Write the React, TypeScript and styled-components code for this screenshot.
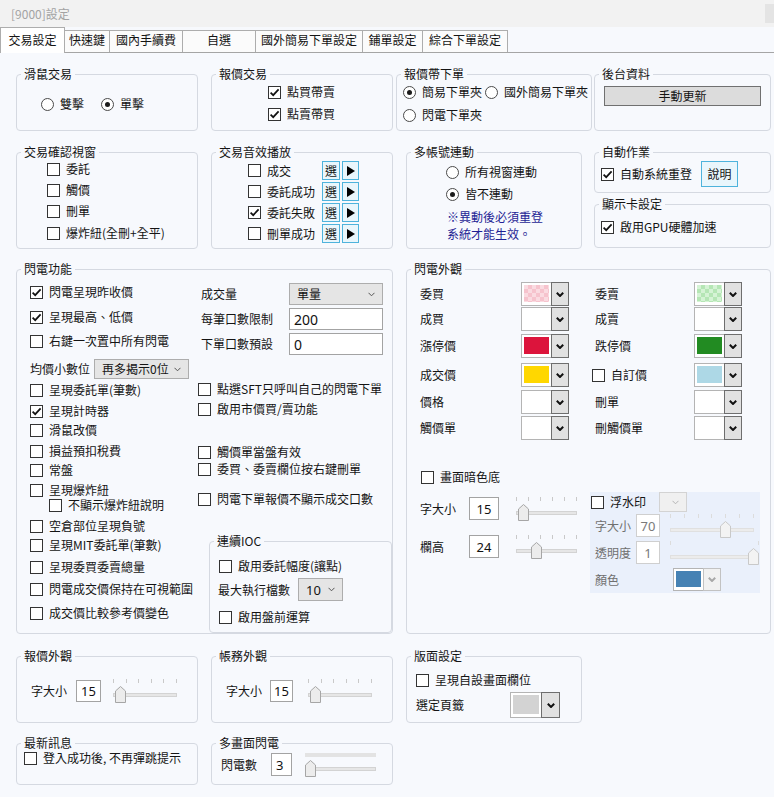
import React from "react";
import styled, { createGlobalStyle } from "styled-components";

const GlobalStyle = createGlobalStyle`
  html, body {
    margin: 0;
    padding: 0;
    background: #f7f9fd;
  }
  body {
    font-family: "Noto Sans CJK TC", "Noto Sans", sans-serif;
    font-size: 12px;
    color: #141414;
  }
`;

const PINK = "repeating-conic-gradient(#f6c3cd 0 25%, #fadbe1 0 50%) 0 0 / 8px 8px";
const GREEN = "repeating-conic-gradient(#b5e6b5 0 25%, #d5f3d5 0 50%) 0 0 / 8px 8px";

const Window = styled.div`
  width: 774px;
  height: 797px;
  overflow: hidden;
  background: #f7f9fd;
`;

const TitleBar = styled.div`
  height: 27px;
  display: flex;
  align-items: center;
  padding-left: 11px;
  background: #f2f2f2;
  color: #a3a3a3;
  line-height: 14px;
`;

const CloseKey = styled.div`
  margin-left: auto;
  margin-right: -20px;
  width: 29px;
  height: 19px;
  background: #e4e4e4;
`;

const TabStrip = styled.div`
  height: 25px;
  display: flex;
  align-items: flex-end;
  border-bottom: 1px solid #a5a5a5;
`;

const Tab = styled.div<{ $w: number; $active?: boolean }>`
  box-sizing: border-box;
  width: ${(p) => p.$w}px;
  height: ${(p) => (p.$active ? 26 : 22)}px;
  margin-bottom: ${(p) => (p.$active ? -1 : 0)}px;
  padding-bottom: ${(p) => (p.$active ? 1 : 3)}px;
  border: 1px solid #adadad;
  border-bottom: none;
  background: ${(p) => (p.$active ? "#ffffff" : "#fbfbfb")};
  position: relative;
  z-index: ${(p) => (p.$active ? 1 : 0)};
  display: flex;
  align-items: center;
  justify-content: center;
  line-height: 14px;
  white-space: nowrap;
  &:not(:first-child) {
    margin-left: -1px;
  }
`;

const Body = styled.div`
  padding: 14px 0 0 16px;
  display: flex;
  flex-direction: column;
`;

const Row = styled.div<{ $mt?: number }>`
  display: flex;
  align-items: flex-start;
  margin-top: ${(p) => p.$mt ?? 0}px;
`;

const Column = styled.div<{ $ml?: number }>`
  display: flex;
  flex-direction: column;
  margin-left: ${(p) => p.$ml ?? 0}px;
`;

const Fieldset = styled.fieldset<{ $w: number; $ml: number; $mt: number }>`
  box-sizing: border-box;
  width: ${(p) => p.$w}px;
  min-width: 0;
  margin: ${(p) => p.$mt}px 0 0 ${(p) => p.$ml}px;
  padding: 0;
  border: 1px solid #d5d9e1;
  border-radius: 4px;
  flex: none;
`;

const Legend = styled.legend`
  margin-left: 4px;
  padding: 0 3px;
  font-size: 12px;
  line-height: 14px;
`;

const Inner = styled.div<{ $h: number }>`
  height: ${(p) => p.$h}px;
`;

const Stack = styled.div<{ $pl?: number; $pt?: number; $w?: number }>`
  display: flex;
  flex-direction: column;
  align-items: flex-start;
  padding: ${(p) => p.$pt ?? 0}px 0 0 ${(p) => p.$pl ?? 0}px;
  ${(p) => (p.$w ? `width: ${p.$w}px; box-sizing: border-box; flex: none;` : "")}
`;

const Split = styled.div`
  display: flex;
  align-items: flex-start;
`;

const Line = styled.div<{ $mt?: number; $ml?: number; $h?: number; $gap?: number; $pl?: number }>`
  display: flex;
  align-items: center;
  height: ${(p) => p.$h ?? 14}px;
  margin-top: ${(p) => p.$mt ?? 0}px;
  margin-left: ${(p) => p.$ml ?? 0}px;
  padding-left: ${(p) => p.$pl ?? 0}px;
  gap: ${(p) => p.$gap ?? 0}px;
  white-space: nowrap;
`;

const Item = styled.div<{ $mt?: number; $ml?: number; $w?: number }>`
  display: flex;
  align-items: center;
  gap: 6px;
  height: 14px;
  line-height: 14px;
  margin-top: ${(p) => p.$mt ?? 0}px;
  margin-left: ${(p) => p.$ml ?? 0}px;
  ${(p) => (p.$w ? `width: ${p.$w}px; flex: none;` : "")}
  white-space: nowrap;
`;

const Cell = styled.span<{ $w: number; $ml?: number; $dim?: boolean }>`
  width: ${(p) => p.$w}px;
  flex: none;
  margin-left: ${(p) => p.$ml ?? 0}px;
  line-height: 14px;
  color: ${(p) => (p.$dim ? "#6f6f6f" : "inherit")};
`;

const CheckBox = styled.span`
  box-sizing: border-box;
  width: 13px;
  height: 13px;
  flex: none;
  border: 1px solid #333333;
  background: #ffffff;
  display: inline-flex;
  align-items: center;
  justify-content: center;
`;

const RadioRing = styled.span<{ $on?: boolean }>`
  box-sizing: border-box;
  width: 13px;
  height: 13px;
  flex: none;
  border-radius: 50%;
  border: 1px solid #4a4a4a;
  background: #ffffff;
  display: inline-flex;
  align-items: center;
  justify-content: center;
  &::after {
    content: "";
    width: 5px;
    height: 5px;
    border-radius: 50%;
    background: ${(p) => (p.$on ? "#1b1b1b" : "transparent")};
  }
`;

const PlainButton = styled.div<{ $w: number; $h: number }>`
  box-sizing: border-box;
  width: ${(p) => p.$w}px;
  height: ${(p) => p.$h}px;
  border: 1px solid #707070;
  background: #dcdcdc;
  display: flex;
  align-items: center;
  justify-content: center;
  line-height: 14px;
`;

const FlatButton = styled.div<{ $w: number; $h: number; $ml?: number }>`
  box-sizing: border-box;
  width: ${(p) => p.$w}px;
  height: ${(p) => p.$h}px;
  margin-left: ${(p) => p.$ml ?? 0}px;
  flex: none;
  border: 1px solid #4eb3dc;
  background: #e9f6fc;
  display: flex;
  align-items: center;
  justify-content: center;
  line-height: 14px;
`;

const Note = styled.div`
  margin-top: 7px;
  margin-left: 1px;
  color: #1f1f95;
  line-height: 17px;
`;

const SelectBox = styled.div<{ $w: number; $h: number; $dim?: boolean; $ml?: number }>`
  box-sizing: border-box;
  width: ${(p) => p.$w}px;
  height: ${(p) => p.$h}px;
  margin-left: ${(p) => p.$ml ?? 0}px;
  flex: none;
  border: 1px solid ${(p) => (p.$dim ? "#d3d3d3" : "#adadad")};
  background: ${(p) => (p.$dim ? "#f0f0f0" : "#e5e5e5")};
  display: flex;
  align-items: center;
  justify-content: space-between;
  padding: 0 7px 0 7px;
  font-size: 12px;
`;

const SelectValue = styled.span<{ $num?: boolean }>`
  font-family: ${(p) => (p.$num ? '"Noto Sans", sans-serif' : "inherit")};
  font-size: ${(p) => (p.$num ? 13 : 12)}px;
  line-height: 14px;
`;

const TextBox = styled.div<{ $w: number; $h: number; $align?: string; $dim?: boolean; $size?: number }>`
  box-sizing: border-box;
  width: ${(p) => p.$w}px;
  height: ${(p) => p.$h}px;
  flex: none;
  border: 1px solid ${(p) => (p.$dim ? "#cfcfcf" : "#a3a3a3")};
  background: #ffffff;
  display: flex;
  align-items: center;
  justify-content: ${(p) => p.$align ?? "center"};
  padding: 0 4px;
  font-family: "Noto Sans", sans-serif;
  font-size: ${(p) => p.$size ?? 13}px;
  color: ${(p) => (p.$dim ? "#7a7a7a" : "#111111")};
`;

const Combo = styled.div<{ $h: number; $ml?: number }>`
  display: flex;
  height: ${(p) => p.$h}px;
  margin-left: ${(p) => p.$ml ?? 0}px;
  flex: none;
`;

const SwatchCell = styled.div<{ $w: number }>`
  box-sizing: border-box;
  width: ${(p) => p.$w}px;
  height: 100%;
  border: 1px solid #b4b4b4;
  border-right: none;
  background: #ffffff;
  padding: 2px 2px 3px 2px;
  display: flex;
`;

const SwatchFill = styled.div<{ $fill: string }>`
  flex: 1;
  background: ${(p) => p.$fill};
`;

const DropCell = styled.div<{ $w: number; $dim?: boolean }>`
  box-sizing: border-box;
  width: ${(p) => p.$w}px;
  height: 100%;
  border: 1px solid ${(p) => (p.$dim ? "#c2c2c2" : "#6e6e6e")};
  background: ${(p) => (p.$dim ? "#f1f1f1" : "#e1e1e1")};
  display: flex;
  align-items: center;
  justify-content: center;
`;

const SliderWrap = styled.div<{ $w: number; $ml?: number }>`
  position: relative;
  width: ${(p) => p.$w}px;
  height: 24px;
  margin-left: ${(p) => p.$ml ?? 0}px;
  flex: none;
`;

const TickRow = styled.div<{ $band?: boolean }>`
  height: 4px;
  display: flex;
  justify-content: space-between;
  background: ${(p) => (p.$band ? "#e3e3e3" : "transparent")};
`;

const Tick = styled.span<{ $dim?: boolean }>`
  width: 1px;
  height: 4px;
  background: ${(p) => (p.$dim ? "#dcdcdc" : "#c9c9c9")};
`;

const Track = styled.div<{ $dim?: boolean }>`
  box-sizing: border-box;
  margin-top: 10px;
  height: 4px;
  border: 1px solid ${(p) => (p.$dim ? "#e0e0e0" : "#d3d3d3")};
  background: ${(p) => (p.$dim ? "#ececec" : "#e6e6e6")};
`;

const Thumb = styled.svg`
  position: absolute;
  top: 7px;
`;

const WaterPanel = styled.div`
  width: 170px;
  height: 101px;
  background: #eaf0fb;
  display: flex;
  flex-direction: column;
  align-items: flex-start;
  flex: none;
`;

const Lower = styled.div`
  display: flex;
  align-items: flex-start;
  margin-top: 8px;
`;

function Group({
  title,
  w,
  h,
  ml = 0,
  mt = 0,
  children,
}: {
  title: string;
  w: number;
  h: number;
  ml?: number;
  mt?: number;
  children?: React.ReactNode;
}) {
  return (
    <Fieldset $w={w} $ml={ml} $mt={mt}>
      <Legend>{title}</Legend>
      <Inner $h={h - 15}>{children}</Inner>
    </Fieldset>
  );
}

function CheckMark() {
  return (
    <svg width="11" height="11" viewBox="0 0 11 11">
      <path d="M1.6 5.6 L4.2 8.2 L9.6 2.4" fill="none" stroke="#111" strokeWidth="1.7" />
    </svg>
  );
}

function CheckItem({ label, on, mt, ml, w }: { label: string; on?: boolean; mt?: number; ml?: number; w?: number }) {
  return (
    <Item $mt={mt} $ml={ml} $w={w}>
      <CheckBox>{on && <CheckMark />}</CheckBox>
      <span>{label}</span>
    </Item>
  );
}

function RadioItem({ label, on, mt }: { label: string; on?: boolean; mt?: number }) {
  return (
    <Item $mt={mt}>
      <RadioRing $on={on} />
      <span>{label}</span>
    </Item>
  );
}

function ThinChevron({ dim }: { dim?: boolean }) {
  return (
    <svg width="7" height="5" viewBox="0 0 7 5">
      <path d="M0.5 0.8 L3.5 3.8 L6.5 0.8" fill="none" stroke={dim ? "#b5b5b5" : "#555"} strokeWidth="1" />
    </svg>
  );
}

function BoldChevron({ dim }: { dim?: boolean }) {
  return (
    <svg width="8" height="5" viewBox="0 0 8 5">
      <path d="M0.8 0.8 L4 4 L7.2 0.8" fill="none" stroke={dim ? "#a8a8a8" : "#111"} strokeWidth="2" />
    </svg>
  );
}

function Select({ w, h, value, dim, ml, num }: { w: number; h: number; value?: string; dim?: boolean; ml?: number; num?: boolean }) {
  return (
    <SelectBox $w={w} $h={h} $dim={dim} $ml={ml}>
      <SelectValue $num={num}>{value}</SelectValue>
      <ThinChevron dim={dim} />
    </SelectBox>
  );
}

function ColorCombo({ fill, w = 48, h = 24, drop = 18, dim, ml }: { fill: string; w?: number; h?: number; drop?: number; dim?: boolean; ml?: number }) {
  return (
    <Combo $h={h} $ml={ml}>
      <SwatchCell $w={w - drop}>
        <SwatchFill $fill={fill} />
      </SwatchCell>
      <DropCell $w={drop} $dim={dim}>
        <BoldChevron dim={dim} />
      </DropCell>
    </Combo>
  );
}

function Slider({ w, ml, at, ticks = 6, band, dim }: { w: number; ml?: number; at: number; ticks?: number; band?: boolean; dim?: boolean }) {
  return (
    <SliderWrap $w={w} $ml={ml}>
      <TickRow $band={band}>
        {!band && Array.from({ length: ticks }).map((_, i) => <Tick key={i} $dim={dim} />)}
      </TickRow>
      <Track $dim={dim} />
      <Thumb width="11" height="17" viewBox="0 0 11 17" style={{ left: at }}>
        <path
          d="M5.5 0.5 L10.5 5 L10.5 16.5 L0.5 16.5 L0.5 5 Z"
          fill={dim ? "#f3f3f3" : "#ececec"}
          stroke={dim ? "#c9c9c9" : "#a6a6a6"}
        />
      </Thumb>
    </SliderWrap>
  );
}

function PlayIcon() {
  return (
    <svg width="8" height="10" viewBox="0 0 8 10">
      <polygon points="0,0 8,5 0,10" fill="#000" />
    </svg>
  );
}

const tabs = [
  { label: "交易設定", w: 65, active: true },
  { label: "快速鍵", w: 46 },
  { label: "國內手續費", w: 74 },
  { label: "自選", w: 74 },
  { label: "國外簡易下單設定", w: 108 },
  { label: "鋪單設定", w: 61 },
  { label: "綜合下單設定", w: 86 },
];

const sounds: [string, boolean][] = [
  ["成交", false],
  ["委託成功", false],
  ["委託失敗", true],
  ["刪單成功", false],
];

const colorRows = [
  { mt: 6, l: "委買", lf: PINK, r: "委賣", rf: GREEN },
  { mt: 1, l: "成買", lf: "#ffffff", r: "成賣", rf: "#ffffff" },
  { mt: 3, l: "漲停價", lf: "#dc143c", r: "跌停價", rf: "#228b22" },
  { mt: 5, l: "成交價", lf: "#ffd700", r: "自訂價", rf: "#add8e6", check: true },
  { mt: 3, l: "價格", lf: "#ffffff", r: "刪單", rf: "#ffffff" },
  { mt: 2, l: "觸價單", lf: "#ffffff", r: "刪觸價單", rf: "#ffffff" },
];

const flashLeft: { label: string; on?: boolean; mt: number; ml?: number }[] = [
  { label: "呈現委託單(筆數)", mt: 4 },
  { label: "呈現計時器", on: true, mt: 7 },
  { label: "滑鼠改價", mt: 5 },
  { label: "損益預扣稅費", mt: 7 },
  { label: "常盤", mt: 5 },
  { label: "呈現爆炸紐", mt: 6 },
  { label: "不顯示爆炸紐說明", mt: 1, ml: 19 },
  { label: "空倉部位呈現負號", mt: 7 },
  { label: "呈現MIT委託單(筆數)", mt: 5 },
  { label: "呈現委買委賣總量", mt: 8 },
  { label: "閃電成交價保持在可視範圍", mt: 8 },
  { label: "成交價比較參考價變色", mt: 10 },
];

export default function App() {
  return (
    <>
      <GlobalStyle />
      <Window>
        <TitleBar>
          [9000]設定
          <CloseKey />
        </TitleBar>
        <TabStrip>
          {tabs.map((t) => (
            <Tab key={t.label} $w={t.w} $active={t.active}>
              {t.label}
            </Tab>
          ))}
        </TabStrip>

        <Body>
          <Row>
            <Group title="滑鼠交易" w={182} h={64}>
              <Stack $pl={24} $pt={16}>
                <Line $gap={17}>
                  <RadioItem label="雙擊" />
                  <RadioItem label="單擊" on />
                </Line>
              </Stack>
            </Group>
            <Group title="報價交易" w={182} h={64} ml={13}>
              <Stack $pl={56} $pt={4}>
                <CheckItem label="點買帶賣" on />
                <CheckItem label="點賣帶買" on mt={8} />
              </Stack>
            </Group>
            <Group title="報價帶下單" w={196} h={64} ml={3}>
              <Stack $pl={6} $pt={4}>
                <Line $gap={3}>
                  <RadioItem label="簡易下單夾" on />
                  <RadioItem label="國外簡易下單夾" />
                </Line>
                <RadioItem label="閃電下單夾" mt={9} />
              </Stack>
            </Group>
            <Group title="後台資料" w={177} h={64} ml={2}>
              <Stack $pl={9} $pt={5}>
                <PlainButton $w={157} $h={20}>手動更新</PlainButton>
              </Stack>
            </Group>
          </Row>

          <Row $mt={14}>
            <Group title="交易確認視窗" w={182} h={104}>
              <Stack $pl={30} $pt={3}>
                <CheckItem label="委託" />
                <CheckItem label="觸價" mt={7} />
                <CheckItem label="刪單" mt={7} />
                <CheckItem label="爆炸紐(全刪+全平)" mt={8} />
              </Stack>
            </Group>
            <Group title="交易音效播放" w={182} h={104} ml={13}>
              <Stack $pl={36} $pt={2}>
                {sounds.map(([label, on], i) => (
                  <Line key={label} $h={19} $mt={i ? 2 : 0}>
                    <CheckItem label={label} on={on} w={74} />
                    <FlatButton $w={18} $h={19}>選</FlatButton>
                    <FlatButton $w={17} $h={19} $ml={2}>
                      <PlayIcon />
                    </FlatButton>
                  </Line>
                ))}
              </Stack>
            </Group>
            <Group title="多帳號連動" w={176} h={104} ml={13}>
              <Stack $pl={39} $pt={6}>
                <RadioItem label="所有視窗連動" />
                <RadioItem label="皆不連動" on mt={8} />
                <Note>
                  ※異動後必須重登
                  <br />
                  系統才能生效。
                </Note>
              </Stack>
            </Group>
            <Column $ml={12}>
              <Group title="自動作業" w={177} h={48}>
                <Stack $pl={6} $pt={2}>
                  <Line $h={26}>
                    <CheckItem label="自動系統重登" on />
                    <FlatButton $w={37} $h={26} $ml={9}>說明</FlatButton>
                  </Line>
                </Stack>
              </Group>
              <Group title="顯示卡設定" w={177} h={51} mt={4}>
                <Stack $pl={6} $pt={9}>
                  <CheckItem label="啟用GPU硬體加速" on />
                </Stack>
              </Group>
            </Column>
          </Row>

          <Row $mt={13}>
            <Group title="閃電功能" w={377} h={372}>
              <Split>
                <Stack $w={181} $pl={13}>
                  <CheckItem label="閃電呈現昨收價" on mt={9} />
                  <CheckItem label="呈現最高、低價" on mt={11} />
                  <CheckItem label="右鍵一次置中所有閃電" mt={10} />
                  <Line $h={20} $mt={11}>
                    <Cell $w={64}>均價小數位</Cell>
                    <Select w={95} h={20} value="再多揭示0位" />
                  </Line>
                  {flashLeft.map((c) => (
                    <CheckItem key={c.label} label={c.label} on={c.on} mt={c.mt} ml={c.ml} />
                  ))}
                </Stack>
                <Stack $w={194}>
                  <Line $h={22} $mt={7} $pl={3}>
                    <Cell $w={88}>成交量</Cell>
                    <Select w={94} h={22} value="單量" />
                  </Line>
                  <Line $h={22} $mt={3} $pl={3}>
                    <Cell $w={88}>每筆口數限制</Cell>
                    <TextBox $w={94} $h={22} $align="flex-start" $size={14}>200</TextBox>
                  </Line>
                  <Line $h={22} $mt={3} $pl={3}>
                    <Cell $w={88}>下單口數預設</Cell>
                    <TextBox $w={94} $h={22} $align="flex-start" $size={14}>0</TextBox>
                  </Line>
                  <CheckItem label="點選SFT只呼叫自己的閃電下單" mt={27} />
                  <CheckItem label="啟用市價買/賣功能" mt={6} />
                  <CheckItem label="觸價單當盤有效" mt={29} />
                  <CheckItem label="委買、委賣欄位按右鍵刪單" mt={3} />
                  <CheckItem label="閃電下單報價不顯示成交口數" mt={16} />
                  <Group title="連續IOC" w={183} h={99} ml={11} mt={28}>
                    <Stack $pl={9}>
                      <CheckItem label="啟用委託幅度(讓點)" mt={11} />
                      <Line $h={23} $mt={5} $ml={-1}>
                        <Cell $w={80}>最大執行檔數</Cell>
                        <Select w={45} h={23} value="10" num />
                      </Line>
                      <CheckItem label="啟用盤前運算" mt={9} />
                    </Stack>
                  </Group>
                </Stack>
              </Split>
            </Group>

            <Group title="閃電外觀" w={365} h={372} ml={13}>
              <Stack $pl={13}>
                {colorRows.map((r) => (
                  <Line key={r.l} $h={24} $mt={r.mt}>
                    <Cell $w={101}>{r.l}</Cell>
                    <ColorCombo fill={r.lf} />
                    {r.check ? (
                      <CheckItem label={r.r} ml={23} w={102} />
                    ) : (
                      <Cell $w={99} $ml={26}>
                        {r.r}
                      </Cell>
                    )}
                    <ColorCombo fill={r.rf} />
                  </Line>
                ))}
                <CheckItem label="畫面暗色底" mt={30} ml={1} />
                <Lower>
                  <Stack $w={170}>
                    <Line $h={23} $mt={5}>
                      <Cell $w={49}>字大小</Cell>
                      <TextBox $w={30} $h={23}>15</TextBox>
                      <Slider w={61} ml={17} at={2} />
                    </Line>
                    <Line $h={23} $mt={15}>
                      <Cell $w={49}>欄高</Cell>
                      <TextBox $w={30} $h={23}>24</TextBox>
                      <Slider w={61} ml={17} at={15} />
                    </Line>
                  </Stack>
                  <WaterPanel>
                    <Line $h={20} $ml={1}>
                      <CheckItem label="浮水印" />
                      <Select w={28} h={20} dim ml={13} />
                    </Line>
                    <Line $h={23} $mt={2} $pl={5}>
                      <Cell $w={41} $dim>字大小</Cell>
                      <TextBox $w={24} $h={23} $dim>70</TextBox>
                      <Slider w={84} ml={10} at={50} ticks={7} dim />
                    </Line>
                    <Line $h={23} $mt={4} $pl={5}>
                      <Cell $w={41} $dim>透明度</Cell>
                      <TextBox $w={24} $h={23} $dim>1</TextBox>
                      <Slider w={89} ml={10} at={78} ticks={2} dim />
                    </Line>
                    <Line $h={23} $mt={4} $pl={5}>
                      <Cell $w={78} $dim>顏色</Cell>
                      <ColorCombo fill="#4682b4" h={23} dim />
                    </Line>
                  </WaterPanel>
                </Lower>
              </Stack>
            </Group>
          </Row>

          <Row $mt={15}>
            <Group title="報價外觀" w={182} h={74}>
              <Stack $pl={14}>
                <Line $h={22} $mt={17}>
                  <Cell $w={45}>字大小</Cell>
                  <TextBox $w={25} $h={22}>15</TextBox>
                  <Slider w={64} ml={12} at={2} />
                </Line>
              </Stack>
            </Group>
            <Group title="帳務外觀" w={182} h={74} ml={13}>
              <Stack $pl={14}>
                <Line $h={22} $mt={17}>
                  <Cell $w={44}>字大小</Cell>
                  <TextBox $w={23} $h={22}>15</TextBox>
                  <Slider w={64} ml={15} at={2} />
                </Line>
              </Stack>
            </Group>
            <Group title="版面設定" w={176} h={74} ml={13}>
              <Stack $pl={9}>
                <CheckItem label="呈現自設畫面欄位" mt={10} />
                <Line $h={26} $mt={5}>
                  <Cell $w={94}>選定頁籤</Cell>
                  <ColorCombo fill="#d3d3d3" w={50} h={26} drop={19} />
                </Line>
              </Stack>
            </Group>
          </Row>

          <Row $mt={13}>
            <Group title="最新訊息" w={182} h={49}>
              <Stack $pl={7} $pt={1}>
                <CheckItem label="登入成功後, 不再彈跳提示" />
              </Stack>
            </Group>
            <Group title="多畫面閃電" w={182} h={49} ml={13}>
              <Stack $pl={9}>
                <Line $h={23} $mt={3}>
                  <Cell $w={50}>閃電數</Cell>
                  <TextBox $w={21} $h={23} $align="flex-start">3</TextBox>
                  <Slider w={71} ml={13} at={0} band />
                </Line>
              </Stack>
            </Group>
          </Row>
        </Body>
      </Window>
    </>
  );
}
